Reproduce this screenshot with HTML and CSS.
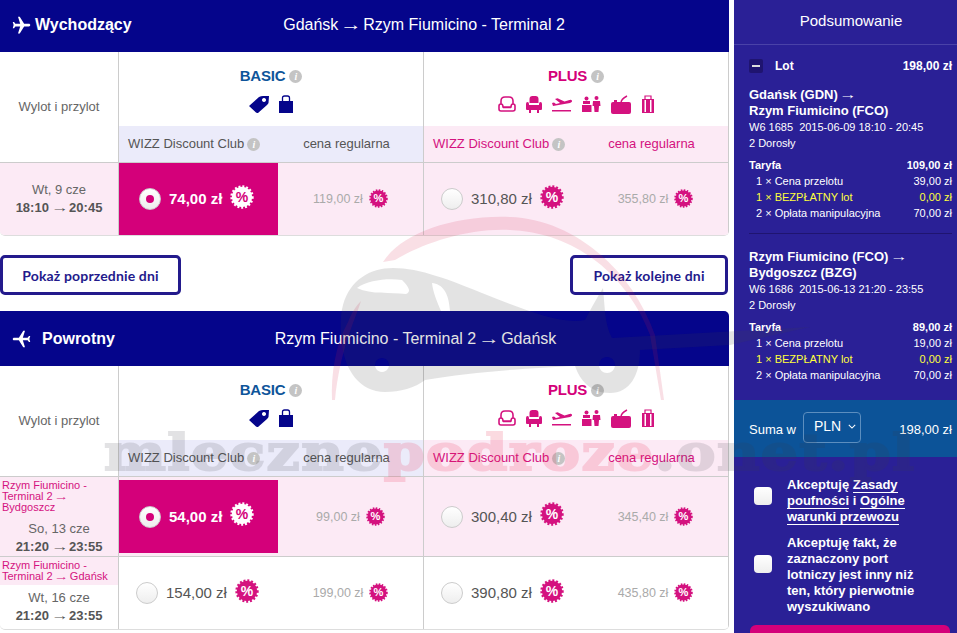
FILE: index.html
```html
<!DOCTYPE html>
<html>
<head>
	<meta charset="utf-8">
	<title>Podsumowanie lotu</title>
	<link rel="stylesheet" href="styles.css">
</head>
<body>
	<svg class="defs" width="0" height="0">
		<symbol id="plane" viewBox="0 0 24 24"><path d="M21 16v-2l-8-5V3.500c0-.83-.67-1.500-1.500-1.500S10 2.670 10 3.500V9l-8 5v2l8-2.500V19l-2 1.500V22l3.500-1 3.500 1v-1.500L13 19v-5.500l8 2.500z"/></symbol>
		<symbol id="tag" viewBox="0 0 20 18"><path fill-rule="evenodd" d="M0 11 L10 2 Q12 1 14 1 L20 1 L19.500 8 Q19 9 18 10 L9 18 Q8 18 7 17.500 Z M15 3 a2 2 0 1 0 .01 0 Z"/></symbol>
		<symbol id="bag" viewBox="0 0 14 18"><path d="M0 6h14v12H0z"/><path d="M3.500 7V3q0-2 2-2h3q2 0 2 2v4" fill="none" stroke="currentColor" stroke-width="1.300"/></symbol>
		<symbol id="seat1" viewBox="0 0 18 17"><path d="M3 8V5q0-4 4-4h4q4 0 4 4v3M1 10q0-2 2-2t2 3h8q0-3 2-3t2 2v3q0 2-2 2H3q-2 0-2-2zM5 11.500h8" fill="none" stroke="currentColor" stroke-width="1.600"/></symbol>
		<symbol id="seat2" viewBox="0 0 16 17"><path d="M3.500 7V3q0-3 3-3h3q3 0 3 3v4zM0 8q0-2 1.500-2T3 8v1h10V8q0-2 1.500-2T16 8v5q0 1-1 1H1q-1 0-1-1zM3 14h2v3H3zM11 14h2v3h-2z"/></symbol>
		<symbol id="takeoff" viewBox="0 0 20 16"><path d="M1 10l-1-3 2-.500 2 1.500 4-1-5-4 2.500-.700 7 3.200 5-1.500q2-.500 2.500.700T18 7z"/><path d="M0 14h19v1.500H0z"/></symbol>
		<symbol id="people" viewBox="0 0 19 16"><circle cx="4.500" cy="2.500" r="2"/><path d="M1 5h7v3H1zM0 9h9.500v7H0z"/><circle cx="14.500" cy="2" r="2"/><path d="M11 5h7l.5 5h-1.500l-.5 6h-4l-.5-6H10.500z"/></symbol>
		<symbol id="case" viewBox="0 0 20 19"><path d="M2 7h16q2 0 2 2v8q0 2-2 2H2q-2 0-2-2V9q0-2 2-2z"/><path d="M10 8q0-4 6-7" fill="none" stroke="currentColor" stroke-width="1.500"/><path d="M3 7V5h3v2z"/></symbol>
		<symbol id="trolley" viewBox="0 0 14 19"><path d="M1 4h12v14H1zM3.500 5v12h1.500V5zM9 5v12h1.500V5z" fill-rule="evenodd"/><path d="M4 4V1h6v3" fill="none" stroke="currentColor" stroke-width="1.200"/></symbol>
		<symbol id="burst" viewBox="0 0 24 24"><circle cx="12" cy="12" r="10.200" stroke="currentColor" stroke-width="3" stroke-dasharray="1.900 1.800"/></symbol>
	</svg>

	<div class="page">
		<main class="flights">
			<section class="flight flight-out">
				<header class="flight-head">
					<h2 class="flight-title"><svg class="plane plane-right"><use href="#plane"/></svg>Wychodzący</h2>
					<div class="flight-route">Gdańsk <span class="arr">→</span> Rzym Fiumicino - Terminal 2</div>
				</header>
				<div class="fare-table">
					<div class="side-head">Wylot i przylot</div>
					<div class="fare-head fare-basic">
						<div class="fare-name">BASIC <i class="info">i</i></div>
						<div class="fare-icons">
							<svg class="ico ico-tag"><use href="#tag"/></svg>
							<svg class="ico ico-bag"><use href="#bag"/></svg>
						</div>
						<div class="fare-sub">
							<span>WIZZ Discount Club <i class="info">i</i></span>
							<span class="regular">cena regularna</span>
						</div>
					</div>
					<div class="fare-head fare-plus">
						<div class="fare-name">PLUS <i class="info">i</i></div>
						<div class="fare-icons">
							<svg class="ico ico-seat1"><use href="#seat1"/></svg>
							<svg class="ico ico-seat2"><use href="#seat2"/></svg>
							<svg class="ico ico-takeoff"><use href="#takeoff"/></svg>
							<svg class="ico ico-people"><use href="#people"/></svg>
							<svg class="ico ico-case"><use href="#case"/></svg>
							<svg class="ico ico-trolley"><use href="#trolley"/></svg>
						</div>
						<div class="fare-sub">
							<span>WIZZ Discount Club <i class="info">i</i></span>
							<span class="regular">cena regularna</span>
						</div>
					</div>

					<div class="day day-pink day-plain">
						<div class="day-date">Wt, 9 cze</div>
						<div class="day-time">18:10 <span class="arr">→</span> 20:45</div>
					</div>
					<div class="prices day-pink">
						<div class="price price-selected"><span class="radio radio-on"></span><span class="amount">74,00 zł</span><svg class="badge" viewBox="0 0 24 24"><use href="#burst"/><text x="12" y="17">%</text></svg></div>
						<div class="price-old">119,00 zł<svg class="badge badge-sm" viewBox="0 0 24 24"><use href="#burst"/><text x="12" y="17">%</text></svg></div>
					</div>
					<div class="prices day-pink">
						<div class="price"><span class="radio"></span><span class="amount">310,80 zł</span><svg class="badge" viewBox="0 0 24 24"><use href="#burst"/><text x="12" y="17">%</text></svg></div>
						<div class="price-old">355,80 zł<svg class="badge badge-sm" viewBox="0 0 24 24"><use href="#burst"/><text x="12" y="17">%</text></svg></div>
					</div>
				</div>
			</section>

			<div class="day-buttons">
				<a class="day-btn day-btn-prev">Pokaż poprzednie dni</a>
				<a class="day-btn day-btn-next">Pokaż kolejne dni</a>
			</div>

			<section class="flight flight-back">
				<header class="flight-head">
					<h2 class="flight-title"><svg class="plane plane-left"><use href="#plane"/></svg>Powrotny</h2>
					<div class="flight-route">Rzym Fiumicino - Terminal 2 <span class="arr">→</span> Gdańsk</div>
				</header>
				<div class="fare-table">
					<div class="side-head">Wylot i przylot</div>
					<div class="fare-head fare-basic">
						<div class="fare-name">BASIC <i class="info">i</i></div>
						<div class="fare-icons">
							<svg class="ico ico-tag"><use href="#tag"/></svg>
							<svg class="ico ico-bag"><use href="#bag"/></svg>
						</div>
						<div class="fare-sub">
							<span>WIZZ Discount Club <i class="info">i</i></span>
							<span class="regular">cena regularna</span>
						</div>
					</div>
					<div class="fare-head fare-plus">
						<div class="fare-name">PLUS <i class="info">i</i></div>
						<div class="fare-icons">
							<svg class="ico ico-seat1"><use href="#seat1"/></svg>
							<svg class="ico ico-seat2"><use href="#seat2"/></svg>
							<svg class="ico ico-takeoff"><use href="#takeoff"/></svg>
							<svg class="ico ico-people"><use href="#people"/></svg>
							<svg class="ico ico-case"><use href="#case"/></svg>
							<svg class="ico ico-trolley"><use href="#trolley"/></svg>
						</div>
						<div class="fare-sub">
							<span>WIZZ Discount Club <i class="info">i</i></span>
							<span class="regular">cena regularna</span>
						</div>
					</div>

					<div class="day day-pink day-long row-line">
						<div class="day-alt">Rzym Fiumicino - Terminal 2 <span class="arr">→</span> Bydgoszcz</div>
						<div class="day-date">So, 13 cze</div>
						<div class="day-time">21:20 <span class="arr">→</span> 23:55</div>
					</div>
					<div class="prices day-pink row-line row-padded">
						<div class="price price-selected"><span class="radio radio-on"></span><span class="amount">54,00 zł</span><svg class="badge" viewBox="0 0 24 24"><use href="#burst"/><text x="12" y="17">%</text></svg></div>
						<div class="price-old">99,00 zł<svg class="badge badge-sm" viewBox="0 0 24 24"><use href="#burst"/><text x="12" y="17">%</text></svg></div>
					</div>
					<div class="prices day-pink row-line">
						<div class="price"><span class="radio"></span><span class="amount">300,40 zł</span><svg class="badge" viewBox="0 0 24 24"><use href="#burst"/><text x="12" y="17">%</text></svg></div>
						<div class="price-old">345,40 zł<svg class="badge badge-sm" viewBox="0 0 24 24"><use href="#burst"/><text x="12" y="17">%</text></svg></div>
					</div>

					<div class="day day-short">
						<div class="day-alt">Rzym Fiumicino - Terminal 2 <span class="arr">→</span> Gdańsk</div>
						<div class="day-date">Wt, 16 cze</div>
						<div class="day-time">21:20 <span class="arr">→</span> 23:55</div>
					</div>
					<div class="prices">
						<div class="price"><span class="radio"></span><span class="amount">154,00 zł</span><svg class="badge" viewBox="0 0 24 24"><use href="#burst"/><text x="12" y="17">%</text></svg></div>
						<div class="price-old">199,00 zł<svg class="badge badge-sm" viewBox="0 0 24 24"><use href="#burst"/><text x="12" y="17">%</text></svg></div>
					</div>
					<div class="prices">
						<div class="price"><span class="radio"></span><span class="amount">390,80 zł</span><svg class="badge" viewBox="0 0 24 24"><use href="#burst"/><text x="12" y="17">%</text></svg></div>
						<div class="price-old">435,80 zł<svg class="badge badge-sm" viewBox="0 0 24 24"><use href="#burst"/><text x="12" y="17">%</text></svg></div>
					</div>
				</div>
			</section>
		</main>

		<aside class="summary">
			<h3 class="summary-title">Podsumowanie</h3>
			<div class="summary-body">
				<div class="lot-row">
					<span class="minus"></span>
					<span class="lot-name">Lot</span>
					<span class="lot-sum">198,00 zł</span>
				</div>
				<div class="leg">
					<div class="leg-route">Gdańsk (GDN) <span class="arr">→</span><br>Rzym Fiumicino (FCO)</div>
					<div class="leg-info">W6 1685&nbsp; 2015-06-09 18:10 - 20:45</div>
					<div class="leg-info">2 Dorosły</div>
					<div class="leg-costs">
						<div class="cost cost-main"><span>Taryfa</span><span>109,00 zł</span></div>
						<div class="cost"><span>1 × Cena przelotu</span><span>39,00 zł</span></div>
						<div class="cost cost-free"><span>1 × BEZPŁATNY lot</span><span>0,00 zł</span></div>
						<div class="cost"><span>2 × Opłata manipulacyjna</span><span>70,00 zł</span></div>
					</div>
				</div>
				<div class="leg leg-second">
					<div class="leg-route">Rzym Fiumicino (FCO) <span class="arr">→</span><br>Bydgoszcz (BZG)</div>
					<div class="leg-info">W6 1686&nbsp; 2015-06-13 21:20 - 23:55</div>
					<div class="leg-info">2 Dorosły</div>
					<div class="leg-costs">
						<div class="cost cost-main"><span>Taryfa</span><span>89,00 zł</span></div>
						<div class="cost"><span>1 × Cena przelotu</span><span>19,00 zł</span></div>
						<div class="cost cost-free"><span>1 × BEZPŁATNY lot</span><span>0,00 zł</span></div>
						<div class="cost"><span>2 × Opłata manipulacyjna</span><span>70,00 zł</span></div>
					</div>
				</div>
			</div>
			<div class="total">
				<span>Suma w</span>
				<span class="currency">PLN <svg class="chevron" viewBox="0 0 10 6"><path d="M1 1l4 4 4-4" fill="none" stroke="currentColor" stroke-width="1.300"/></svg></span>
				<span class="total-sum">198,00 zł</span>
			</div>
			<label class="accept">
				<span class="check"></span>
				<span>Akceptuję <a>Zasady poufności</a> i <a>Ogólne warunki przewozu</a></span>
			</label>
			<label class="accept accept-second">
				<span class="check"></span>
				<span>Akceptuję fakt, że zaznaczony port lotniczy jest inny niż ten, który pierwotnie wyszukiwano</span>
			</label>
			<div class="continue"></div>
		</aside>
	</div>

	<!-- znak wodny na wierzchu -->
	<svg class="wm-logo" viewBox="0 0 957 633" width="957" height="633">
		<path class="wm-red" d="M383 262C400 235 450 215 510 217C570 219 630 265 655 335L664 400H661L650 335C625 270 570 232 510 230C465 228 420 245 395 260Z"/>
		<path class="wm-red" d="M332 400C331 375 335 345 348 322C352 312 356 306 361 301C355 320 340 350 335 400Z"/>
		<path class="wm-body" fill-rule="evenodd" d="M343 305C350 280 370 268 393 268C420 268 450 280 487 295C520 308 560 325 585 320C590 310 597 298 603 288C605 310 605 325 612 338L810 327L730 345L640 350C640 375 630 393 610 393C590 393 580 380 575 366C530 368 470 372 425 380C415 388 400 392 385 392C360 392 345 370 342 345C340 330 340 315 343 305ZM382 358a7 7 0 1 0 .01 0ZM607 357a8 8 0 1 0 .01 0Z"/>
		<path d="M357 288C368 280 388 278 402 280C410 288 411 292 406 294C390 292 372 295 357 288ZM432 283C442 284 449 292 450 311H441C437 302 433 292 432 283Z" fill="#fff"/>
	</svg>
	<div class="wm-text"><span class="wm-gray">mleczne</span><span class="wm-pink">podroze</span><span class="wm-gray">.onet.pl</span></div>
</body>
</html>
```

FILE: styles.css
```css
html,body{margin: 0;padding: 0;height: 100%;overflow: hidden;}
body{background: #fff;font:12px/16px "Liberation Sans",Arial,sans-serif;color: #555;position: relative;}
h2,h3{margin: 0;font-weight: 400;}
.defs{position: absolute;}
/* strzalka w Liberation jest krotka */
.arr{display: inline-block;transform: scaleX(1.35);}

.page{display: flex;gap: 5px;height: 100%;}
.flights{width: 729px;flex: none;}

/* naglowek lotu */
.flight-head{
	display: grid;
	grid-template-columns: 119px 1fr;
	align-items: center;
	box-sizing: border-box;
	background: #05058b;
	color: #fff;
}
.flight-out .flight-head{height: 52px;padding-bottom: 2px;}
.flight-back .flight-head{height: 55px;border-radius: 0 5px 0 0;}
.flight-back .flight-route{padding-right: 17px;}
.flight-title{display: flex;align-items: center;padding-left: 11px;font-size: 16px;font-weight: 700;white-space: nowrap;}
.flight-route{text-align: center;font-size: 16px;}
.plane{width: 21px;height: 21px;fill: #fff;margin-right: 3px;flex: none;}
.plane-right{transform: rotate(90deg);}
.plane-left{transform: rotate(-90deg);margin-right: 10px;}

/* tabela taryf */
.fare-table{
	display: grid;
	grid-template-columns: 119px 305px 305px;
	border-bottom: 1px solid #ddd;
	border-radius: 0 0 5px 5px;
	overflow: hidden;
}
.side-head{display: flex;align-items: center;justify-content: center;height: 111px;box-sizing: border-box;border-right: 1px solid #ccc;border-bottom: 1px solid #ccc;text-align: center;font-size: 13px;color: #666;}
.fare-head{height: 111px;box-sizing: border-box;border-right: 1px solid #ccc;border-bottom: 1px solid #ccc;display: flex;flex-direction: column;align-items: center;}
.fare-name{margin-top: 15px;font-size: 15px;line-height: 18px;font-weight: 700;letter-spacing: -.2px;display: flex;align-items: center;gap: 4px;}
.fare-basic .fare-name{color: #0e559a;}
.fare-plus .fare-name{color: #d4007a;}
.fare-icons{display: flex;align-items: center;justify-content: center;gap: 10px;height: 22px;margin-top: 8px;}
.fare-basic .fare-icons{color: #05058b;fill: #05058b;}
.fare-plus .fare-icons{color: #d4127f;fill: #d4127f;}
.ico{display: block;}
.ico-tag{width: 20px;height: 18px;}
.ico-bag{width: 14px;height: 18px;}
.ico-seat1{width: 18px;height: 17px;}
.ico-seat2{width: 16px;height: 17px;}
.ico-takeoff{width: 20px;height: 16px;}
.ico-people{width: 19px;height: 16px;}
.ico-case{width: 20px;height: 19px;}
.ico-trolley{width: 14px;height: 19px;}
.fare-sub{align-self: stretch;margin-top: auto;height: 36px;display: grid;grid-template-columns: 159px 1fr;align-items: center;font-size: 13px;line-height: 16px;}
.fare-sub > span:first-child{padding-left: 9px;display: flex;align-items: center;gap: 3px;}
.fare-basic .fare-sub{background: #ebebfa;color: #555;}
.fare-plus .fare-sub{background: #fceaf5;color: #d4127f;}
.regular{text-align: center;padding-right: 8px;}
.info{display: inline-block;width: 13px;height: 13px;border-radius: 50%;background: #c4c4c4;color: #fff;font: italic 700 10px/13px "Liberation Serif",serif;text-align: center;letter-spacing: 0;}

/* wiersze z dniami */
.day{border-right: 1px solid #ccc;text-align: center;box-sizing: border-box;display: flex;flex-direction: column;color: #666;}
.day-pink{background: #fceaf5;}
.day-plain{height: 72px;justify-content: center;}
.day-long{height: 80px;}
.day-short{height: 72px;}
.day-date{font-size: 13px;line-height: 18px;}
.day-time{font-size: 13px;font-weight: 700;line-height: 18px;color: #555;}
.day-alt{font-size: 11px;line-height: 11px;color: #d4127f;text-align: left;padding: 3px 2px 3px;}
.day-long .day-alt{margin-bottom: 4px;}
.day-short .day-alt{background: #fceaf5;margin-bottom: 4px;}
.row-line{border-bottom: 1px solid #ccc;}

.prices{display: grid;grid-template-columns: 159px 1fr;border-right: 1px solid #ccc;}
.row-padded{padding: 3px 0 3px;box-sizing: border-box;}
.price{display: flex;align-items: center;padding-left: 17px;gap: 8px;}
.price-selected{background: #d4007a;color: #fff;padding-left: 20px;}
.amount{font-size: 15px;white-space: nowrap;}
.price-selected .amount{font-size: 15px;font-weight: 700;}
.price-old{display: flex;align-items: center;justify-content: center;gap: 6px;color: #aaa;font-size: 12.500px;}
.radio{width: 20px;height: 20px;border-radius: 50%;border: 1px solid #ccc;background: linear-gradient(#fff,#eee);flex: none;position: relative;}
.radio-on::after{content: "";position: absolute;left: 6px;top: 6px;width: 8px;height: 8px;border-radius: 50%;background: #d4007a;}
.badge{width: 24px;height: 24px;color: #d4127f;fill: #d4127f;flex: none;overflow: visible;margin-top: -5px;}
.badge text{font: 700 14px "Liberation Sans",sans-serif;fill: #fff;text-anchor: middle;}
.badge-sm{width: 19px;height: 19px;margin-top: -1px;}
.price-selected .badge{color: #fff;fill: #fff;}
.price-selected .badge text{fill: #d4007a;}

/* przyciski */
.day-buttons{display: flex;justify-content: space-between;padding: 19px 1px 16px 0;}
.day-btn{display: flex;align-items: center;justify-content: center;height: 40px;box-sizing: border-box;border: 3px solid #231a8c;border-radius: 5px;font: 700 14px Lato,sans-serif;letter-spacing: .15px;color: #231a8c;background: #fff;}
.day-btn-prev{width: 181px;}
.day-btn-next{width: 158px;}

/* podsumowanie */
.summary{width: 223px;flex: none;background: #2a2096;color: #fff;display: flex;flex-direction: column;}
.summary-title{height: 45px;flex: none;box-sizing: border-box;line-height: 42px;padding-left: 11px;text-align: center;font-size: 15px;border-bottom: 1px solid #4a42a8;}
.summary-body{padding: 0 5px 0 15px;height: 355px;flex: none;box-sizing: border-box;}
.lot-row{display: flex;align-items: center;height: 14px;margin-top: 14px;font-weight: 700;}
.minus{width: 14px;height: 14px;background: #1f1470;border-radius: 2px;margin-right: 12px;position: relative;}
.minus::after{content: "";position: absolute;left: 3px;right: 3px;top: 6px;height: 2px;background: #ddd;}
.lot-sum{margin-left: auto;}
.leg{margin-top: 14px;padding-bottom: 12px;border-bottom: 1px solid #1f1470;}
.leg-second{margin-top: 15px;border-bottom: 0;}
.leg-route{font-weight: 700;font-size: 13px;line-height: 16px;}
.leg-info{font-size: 11px;line-height: 16px;}
.leg-costs{margin-top: 6px;font-size: 11px;line-height: 16px;}
.cost{display: flex;justify-content: space-between;padding-left: 7px;}
.cost-main{padding-left: 0;font-weight: 700;}
.cost-free{color: #ffff3c;}

.total{display: flex;align-items: center;height: 57px;flex: none;box-sizing: border-box;background: #0c5398;padding: 2px 5px 0 15px;font-size: 13px;}
.currency{display: flex;align-items: center;gap: 7px;margin: -4px 0 0 7px;width: 58px;height: 31px;padding: 0 0 3px 10px;box-sizing: border-box;border: 1px solid #5c8ebf;border-radius: 4px;font-size: 14px;}
.chevron{width: 8px;height: 5px;}
.total-sum{margin-left: auto;}

.accept{display: flex;align-items: flex-start;padding: 0 27px 0 20px;gap: 15px;font-size: 13px;font-weight: 700;margin-top: 20px;}
.accept .check{margin-top: 10px;}
.accept-second{margin-top: 10px;}
.accept-second .check{margin-top: 20px;}
.accept a{color: #fff;border-bottom: 1px solid #fff;}
.check{width: 18px;height: 18px;border-radius: 4px;background: linear-gradient(#fff,#eee);flex: none;}
.continue{height: 30px;margin: 10px 7px 0 16px;background: #d4007a;border-radius: 6px 6px 0 0;flex: none;}

/* znak wodny */
.wm-logo{position: absolute;left: 0;top: 0;pointer-events: none;}
.wm-red{fill: #d81e4a;opacity: .14;}
.wm-body{fill: #444;opacity: .15;}
.wm-text{
	position: absolute;
	left: 104px;
	top: 423px;
	font: 700 50px/60px "DejaVu Serif",serif;
	letter-spacing: 1.200px;
	white-space: nowrap;
	transform: scaleX(1.17);
	transform-origin: left top;
	-webkit-text-stroke: 2px currentColor;
	pointer-events: none;
}
.wm-gray{color: #3c3c46;opacity: .14;}
.wm-pink{color: #eb2850;opacity: .17;}
```
